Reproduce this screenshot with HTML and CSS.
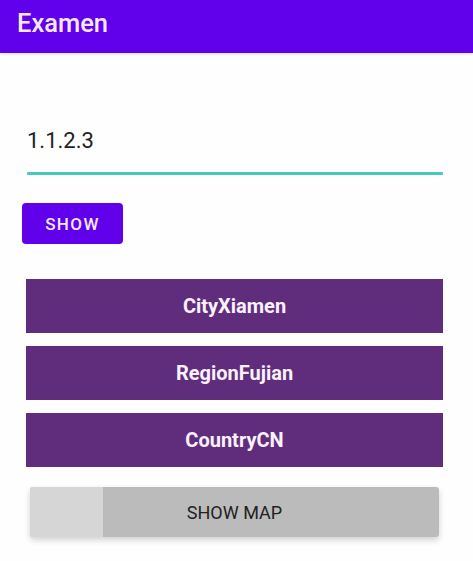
FILE: index.html
```html
<!DOCTYPE html>
<html>
<head>
<meta charset="utf-8">
<link rel="stylesheet" href="styles.css">
</head>
<body>
<header class="appbar"><span class="title">Examen</span></header>
<main class="content">
  <div class="field">
    <div class="field-text">1.1.2.3</div>
    <div class="field-line"></div>
  </div>
  <button class="btn-show">SHOW</button>
  <div class="rows">
    <div class="row">CityXiamen</div>
    <div class="row">RegionFujian</div>
    <div class="row">CountryCN</div>
  </div>
  <button class="btn-map"><span class="ripple"></span><span class="map-label">SHOW MAP</span></button>
</main>
</body>
</html>
```
FILE: styles.css
```css
* { box-sizing: border-box; }
html, body { margin: 0; padding: 0; }
body {
  width: 473px;
  height: 561px;
  background: #fefefe;
  font-family: Roboto, "Noto Sans", sans-serif;
  overflow: hidden;
}
.appbar {
  height: 53px;
  background: #6100ea;
  padding: 8px 0 0 17px;
  box-shadow: 0 1px 3px rgba(0,0,0,0.15);
}
.title {
  display: block;
  color: #f6e8fb;
  font-size: 25.5px;
  font-weight: 500;
  line-height: 30px;
}
.content {
  display: flex;
  flex-direction: column;
  padding: 0 30px 0 22px;
}
.field {
  margin: 74px 0 0 5px;
  width: 416px;
}
.field-text {
  font-size: 22px;
  line-height: 28px;
  color: #222;
}
.field-line {
  margin-top: 17px;
  height: 3px;
  background: #45c8c1;
  border-radius: 1px;
}
.btn-show {
  margin-top: 28px;
  width: 101px;
  height: 41px;
  border: none;
  border-radius: 4px;
  background: #6100ea;
  color: #f6e8fb;
  font-family: Roboto, sans-serif;
  font-size: 17px;
  font-weight: 500;
  letter-spacing: 1.4px;
  padding: 0;
  align-self: flex-start;
}
.rows {
  margin: 35px 0 0 4px;
  width: 417px;
  display: flex;
  flex-direction: column;
  gap: 13px;
}
.row {
  height: 54px;
  background: #5f2d7c;
  color: #fbf1fb;
  font-size: 20px;
  font-weight: 700;
  display: flex;
  align-items: center;
  justify-content: center;
}
.btn-map {
  margin: 20px 0 0 8px;
  width: 409px;
  height: 50px;
  border: none;
  border-radius: 3px;
  background: #bbbbbb;
  padding: 0;
  display: flex;
  align-items: center;
  justify-content: center;
  position: relative;
  overflow: hidden;
  box-shadow: 0 3px 6px rgba(0,0,0,0.18);
  font-family: Roboto, sans-serif;
}
.ripple {
  position: absolute;
  left: 0; top: 0; bottom: 0;
  width: 73px;
  background: #d6d6d6;
}
.map-label {
  position: relative;
  font-size: 18px;
  color: #222;
}
```
